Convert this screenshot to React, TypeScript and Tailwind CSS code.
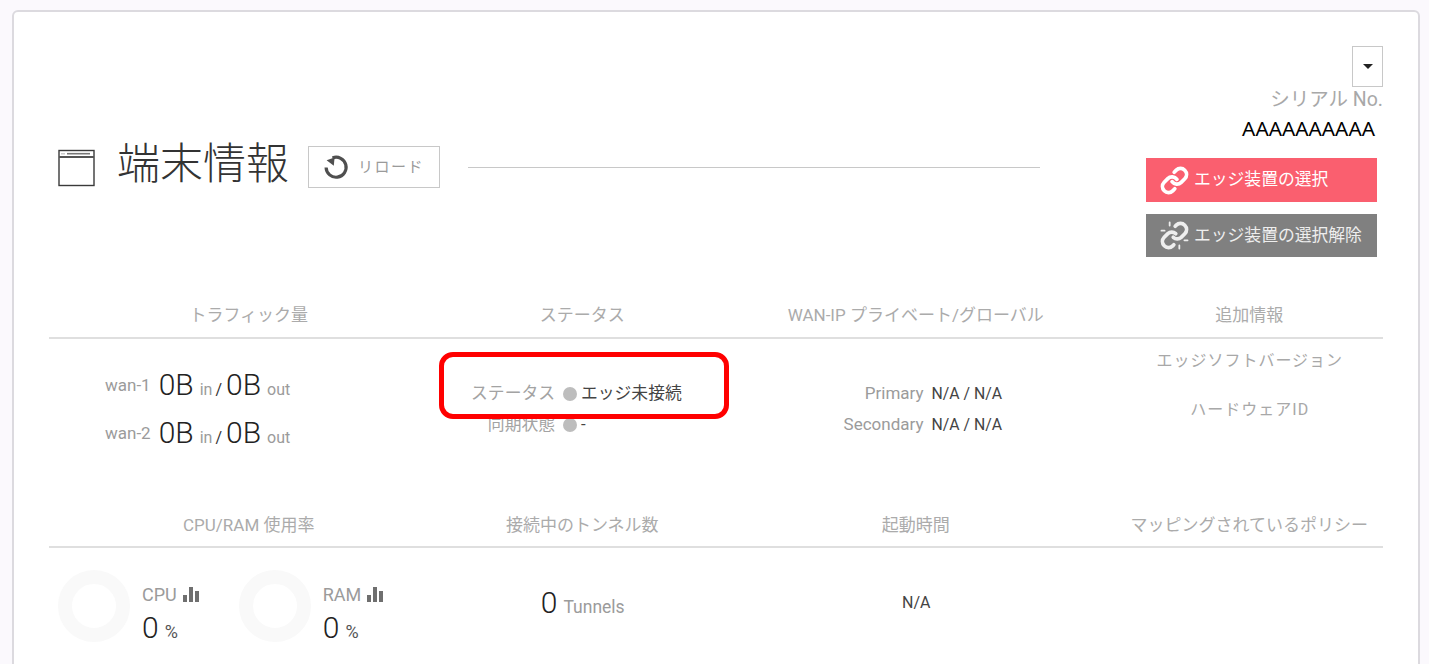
import React from "react";
import { Link } from "lucide-react";

const font = "font-['Roboto','Noto_Sans_CJK_JP',sans-serif]";
const cols = "grid grid-cols-[367px_repeat(3,333.5px)]";

function WindowIcon() {
  return (
    <svg width="38" height="38" viewBox="0 0 38 38" fill="none" stroke="#3a3a3a" className="mt-[4px] shrink-0">
      <rect x="1" y="1.5" width="35" height="35" strokeWidth="1.4" />
      <line x1="1" y1="8" x2="36" y2="8" strokeWidth="1.8" stroke="#555" />
      <line x1="9" y1="4.7" x2="32" y2="4.7" strokeWidth="1.6" stroke="#777" />
      <line x1="3.5" y1="4.7" x2="7.5" y2="4.7" strokeWidth="1.6" stroke="#999" strokeDasharray="1 1" />
    </svg>
  );
}

function ReloadIcon() {
  return (
    <svg width="26" height="26" viewBox="0 0 26 26" fill="none" className="shrink-0">
      <path d="M9.5 3.9a10 10 0 1 1-6.4 9.6" stroke="#4f4f4f" strokeWidth="3.2" />
      <path d="M3.6 6.2 11.6 3.4 10.8 11.8z" fill="#4f4f4f" />
    </svg>
  );
}

function BarsIcon() {
  return (
    <svg width="16" height="16" viewBox="0 0 16 16" fill="#6f6f6f">
      <rect x="0" y="9" width="4" height="7" />
      <rect x="6" y="1" width="4" height="15" />
      <rect x="12" y="5" width="4" height="11" />
    </svg>
  );
}

function BrokenLinkIcon() {
  return (
    <svg width="29" height="29" viewBox="0 0 24 24" fill="none" stroke="currentColor" strokeWidth="3.1" strokeLinecap="round" className="shrink-0">
      <path d="M11 13.5a5 5 0 0 0 6.54.04l3-3a5 5 0 0 0-7.07-7.07l-.9.9" />
      <path d="M13 10.5a5 5 0 0 0-6.54-.04l-3 3a5 5 0 0 0 7.07 7.07l.9-.9" />
      <path d="M8 1.2v2.6M1.2 8h2.6M16 20.2v2.6M20.2 16h2.6" strokeWidth="1.5" />
    </svg>
  );
}

function TrafficRow({ name }: { name: string }) {
  return (
    <div className="flex items-baseline h-[48px] text-[16px] text-[#9b9b9b]">
      <span className="relative -top-[4px] text-[17px]">{name}</span>
      <span className="ml-[8px] text-[30px] font-light text-[#222]">0B</span>
      <span className="ml-[6px]">in</span>
      <span className="ml-[3px] text-[#333]">/</span>
      <span className="ml-[4px] text-[30px] font-light text-[#222]">0B</span>
      <span className="ml-[6px]">out</span>
    </div>
  );
}

function StatusRow({ label, value }: { label: string; value: string }) {
  return (
    <div className="flex items-center h-[31px] text-[16.8px]">
      <span className="w-[139px] text-right text-[#a3a3a3]">{label}</span>
      <span className="ml-[8px] w-[14px] h-[14px] rounded-full bg-[#bdbdbd]" />
      <span className="ml-[4px] text-[#444]">{value}</span>
    </div>
  );
}

function WanRow({ label }: { label: string }) {
  return (
    <div className="flex items-center h-[31px] text-[15.8px]">
      <span className="w-[174px] text-right text-[17px] text-[#9b9b9b]">{label}</span>
      <span className="ml-[8px] text-[#444]">N/A / N/A</span>
    </div>
  );
}

function Meter({ label }: { label: string }) {
  return (
    <div className="flex items-start">
      <div className="w-[72px] h-[72px] rounded-full border-[14px] border-[#f9f9f9]" />
      <div className="ml-[12px] pt-[12px]">
        <div className="flex items-center gap-[6px] text-[18px] text-[#9b9b9b] h-[24px]">
          {label}
          <BarsIcon />
        </div>
        <div className="flex items-baseline text-[#222]">
          <span className="text-[30px] font-light leading-[43px]">0</span>
          <span className="ml-[6px] text-[18px] text-[#555]">%</span>
        </div>
      </div>
    </div>
  );
}

function HeadRow({ items }: { items: string[] }) {
  return (
    <div className="grid grid-cols-[repeat(4,333.5px)] pl-[33px] h-[24px] text-[17px] text-[#ababab] text-center leading-[24px]">
      {items.map((t) => (
        <div key={t} className="whitespace-nowrap">
          {t}
        </div>
      ))}
    </div>
  );
}

export default function App() {
  return (
    <div className={`${font} relative h-[664px] overflow-hidden bg-[#fbf9fd] px-[12px] pt-[10px]`}>
      <div className="h-[700px] w-[1408px] rounded-[6px] border-2 border-[#dcdadf] bg-white px-[35px]">
        {/* header */}
        <div className="flex h-[247px] pt-[34px]">
          <div className="flex-1 pt-[98px] pl-[9px]">
            <div className="flex items-center">
              <WindowIcon />
              <h1 className="ml-[21px] mb-[4px] text-[43px] leading-[38px] font-light text-[#333] whitespace-nowrap">端末情報</h1>
              <button className="ml-[19px] mt-[1px] flex h-[42px] w-[132px] translate-y-px items-center border border-[#c8c8c8] pl-[14px] text-[15px] tracking-[1.5px] text-[#9a9a9a]">
                <ReloadIcon />
                <span className="ml-[9px]">リロード</span>
              </button>
              <div className="ml-[28px] mt-[4px] h-px w-[572px] bg-[#c8c8c8]" />
            </div>
          </div>
          <div className="flex w-[240px] flex-col items-end">
            <div className="flex h-[41px] w-[31px] items-center justify-center border border-[#c8c8c8]">
              <span className="h-0 w-0 border-x-[5px] border-t-[5px] border-x-transparent border-t-[#222]" />
            </div>
            <div className="text-[19.5px] leading-[26px] text-[#a8a8a8]">シリアル No.</div>
            <div className="mr-[8px] text-[20.8px] leading-[30px] font-['Noto_Sans',sans-serif] text-black">AAAAAAAAAA</div>
            <div className="mr-[6px] mt-[15px] flex h-[44px] w-[231px] items-center bg-[#fa5f6f] pl-[14px] text-[16.8px] text-white">
              <Link size={29} strokeWidth={3.1} className="shrink-0" />
              <span className="ml-[5px]">エッジ装置の選択</span>
            </div>
            <div className="mr-[6px] mt-[12px] flex h-[43px] w-[231px] items-center bg-[#808080] pl-[14px] text-[16.8px] text-[#eee]">
              <BrokenLinkIcon />
              <span className="ml-[5px]">エッジ装置の選択解除</span>
            </div>
          </div>
        </div>

        {/* top table */}
        <div className="pt-[44px]">
          <HeadRow items={["トラフィック量", "ステータス", "WAN-IP プライベート/グローバル", "追加情報"]} />
          <div className="mt-[10px] h-[2px] bg-[#dfdfdf]" />
          <div className={`${cols} h-[174px]`}>
            <div className="pt-[23px] pl-[56px]">
              <TrafficRow name="wan-1" />
              <TrafficRow name="wan-2" />
            </div>
            <div className="pt-[39px]">
              <StatusRow label="ステータス" value="エッジ未接続" />
              <StatusRow label="同期状態" value="-" />
            </div>
            <div className="pt-[39px]">
              <WanRow label="Primary" />
              <WanRow label="Secondary" />
            </div>
            <div className="pt-[10px] text-center text-[16px] tracking-[1px] text-[#a8a8a8]">
              <div className="h-[49px] leading-[24px]">エッジソフトバージョン</div>
              <div className="leading-[24px]">ハードウェアID</div>
            </div>
          </div>
        </div>

        {/* bottom table */}
        <HeadRow items={["CPU/RAM 使用率", "接続中のトンネル数", "起動時間", "マッピングされているポリシー"]} />
        <div className="mt-[9px] h-[2px] bg-[#dfdfdf]" />
        <div className={`${cols} pt-[22px]`}>
          <div className="flex gap-[40px] pl-[9px]">
            <Meter label="CPU" />
            <Meter label="RAM" />
          </div>
          <div className="flex items-baseline justify-center pt-[17px]">
            <span className="text-[30px] font-light leading-[32px] text-[#222]">0</span>
            <span className="ml-[6px] text-[17.5px] text-[#9b9b9b]">Tunnels</span>
          </div>
          <div className="pt-[21px] text-center text-[16px] text-[#444]">N/A</div>
          <div />
        </div>
      </div>

      {/* callout drawn over the screenshot */}
      <div className="absolute left-[439px] top-[352px] h-[67px] w-[290px] rounded-[14px] border-[5px] border-[#ff0000]" />
    </div>
  );
}
